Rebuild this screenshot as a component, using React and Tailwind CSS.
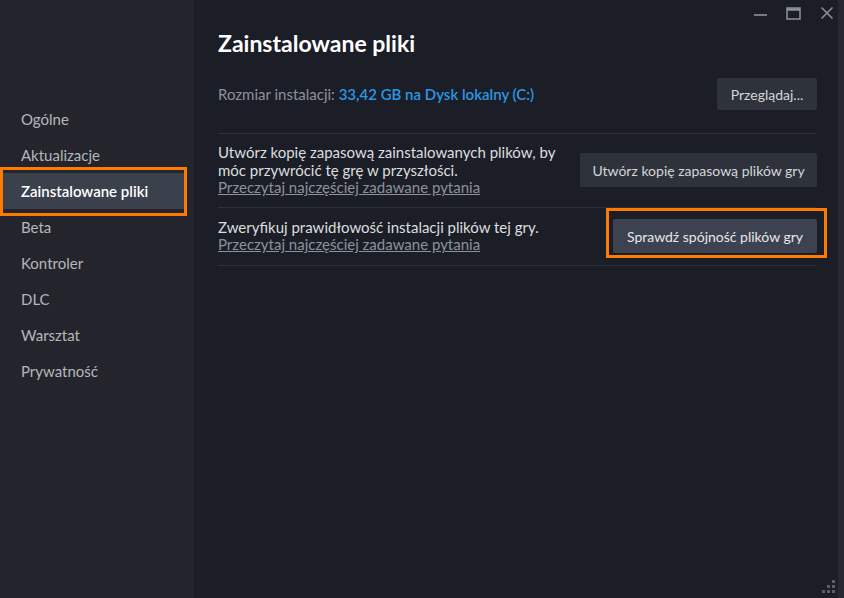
import React from "react";

const items = ["Ogólne", "Aktualizacje", "Zainstalowane pliki", "Beta", "Kontroler", "DLC", "Warsztat", "Prywatność"];

function Controls() {
  return (
    <div className="flex h-[26px] items-center justify-end pr-[5px] text-[#8e939b]">
      <svg className="mt-[2px]" width="14" height="14" viewBox="0 0 14 14"><line x1="0" y1="8" x2="13" y2="8" stroke="currentColor" strokeWidth="1.6" /></svg>
      <svg className="ml-[18px]" width="15" height="13" viewBox="0 0 15 13"><rect x="1" y="1" width="13" height="11" fill="none" stroke="currentColor" strokeWidth="1.5" /><line x1="1" y1="2.5" x2="14" y2="2.5" stroke="currentColor" strokeWidth="2.5" /></svg>
      <svg className="ml-[20px]" width="12" height="12" viewBox="0 0 12 12"><path d="M0.5 0.5 L11.5 11.5 M11.5 0.5 L0.5 11.5" stroke="currentColor" strokeWidth="1.5" /></svg>
    </div>
  );
}

export default function App() {
  return (
    <div className="flex h-[598px] w-[844px] overflow-hidden bg-[#1b1e27] font-['Lato','Noto_Sans',sans-serif]">
      <aside className="flex w-[194px] shrink-0 flex-col bg-[#24252c] pt-[101px]">
        {items.map((t, i) =>
          i === 2 ? (
            <div key={t} className="relative flex h-9 w-[187px] items-center bg-[#3a414d] pl-[21px] text-[15px] font-semibold text-white">
              {t}
              <span className="pointer-events-none absolute -top-[6px] -bottom-[7px] left-0 right-0 border-[3px] border-[#ff7a00]" />
            </div>
          ) : (
            <div key={t} className="flex h-9 items-center pl-[21px] text-[15px] text-[#b3b7bc]">
              {t}
            </div>
          )
        )}
      </aside>
      <main className="relative flex min-w-0 flex-1 flex-col pl-[24px] pr-[21px]">
        <div className="-mr-[21px]"><Controls /></div>
        <h1 className="mt-[2px] text-[23px] font-bold leading-[30px] text-white">Zainstalowane pliki</h1>
        <div className="mt-[20px] flex h-8 items-center justify-between">
          <div className="text-[15px] text-[#8b929a]">
            Rozmiar instalacji: <span className="font-semibold text-[#2d96e2]">33,42 GB na Dysk lokalny (C:)</span>
          </div>
          <button className="h-8 w-[100px] rounded-[2px] bg-[#2e323b] text-[14px] text-[#d4d7da]">Przeglądaj...</button>
        </div>
        <div className="mt-[23px] h-px bg-[#2c303a]" />
        <div className="flex items-center justify-between py-[10px]">
          <div className="text-[15px] leading-[17.5px] text-[#dcdedf]">
            <div>Utwórz kopię zapasową zainstalowanych plików, by</div>
            <div>móc przywrócić tę grę w przyszłości.</div>
            <div className="text-[#8b929a] underline">Przeczytaj najczęściej zadawane pytania</div>
          </div>
          <button className="h-[34px] w-[237px] rounded-[2px] bg-[#2e323b] text-[14px] text-[#d4d7da]">Utwórz kopię zapasową plików gry</button>
        </div>
        <div className="h-px bg-[#2c303a]" />
        <div className="flex items-center justify-between py-[11px]">
          <div className="text-[15px] leading-[17.5px] text-[#dcdedf]">
            <div>Zweryfikuj prawidłowość instalacji plików tej gry.</div>
            <div className="text-[#8b929a] underline">Przeczytaj najczęściej zadawane pytania</div>
          </div>
          <div className="relative">
            <button className="h-[34px] w-[204px] rounded-[2px] bg-[#3d4250] text-[14px] text-[#e6e8ea]">Sprawdź spójność plików gry</button>
            <span className="pointer-events-none absolute -top-[11px] -bottom-[5px] -left-[7px] -right-[10px] border-[3px] border-[#ff7a00]" />
          </div>
        </div>
        <div className="h-px bg-[#2c303a]" />
        <svg className="absolute bottom-[3px] right-[1px]" width="16" height="16" viewBox="0 0 16 16" fill="#5b5f68">
          <rect x="11" y="1" width="3" height="3" />
          <rect x="6" y="6" width="3" height="3" /><rect x="11" y="6" width="3" height="3" />
          <rect x="1" y="11" width="3" height="3" /><rect x="6" y="11" width="3" height="3" /><rect x="11" y="11" width="3" height="3" />
        </svg>
      </main>
      <div className="w-[6px] shrink-0 bg-[#262931]" />
    </div>
  );
}
